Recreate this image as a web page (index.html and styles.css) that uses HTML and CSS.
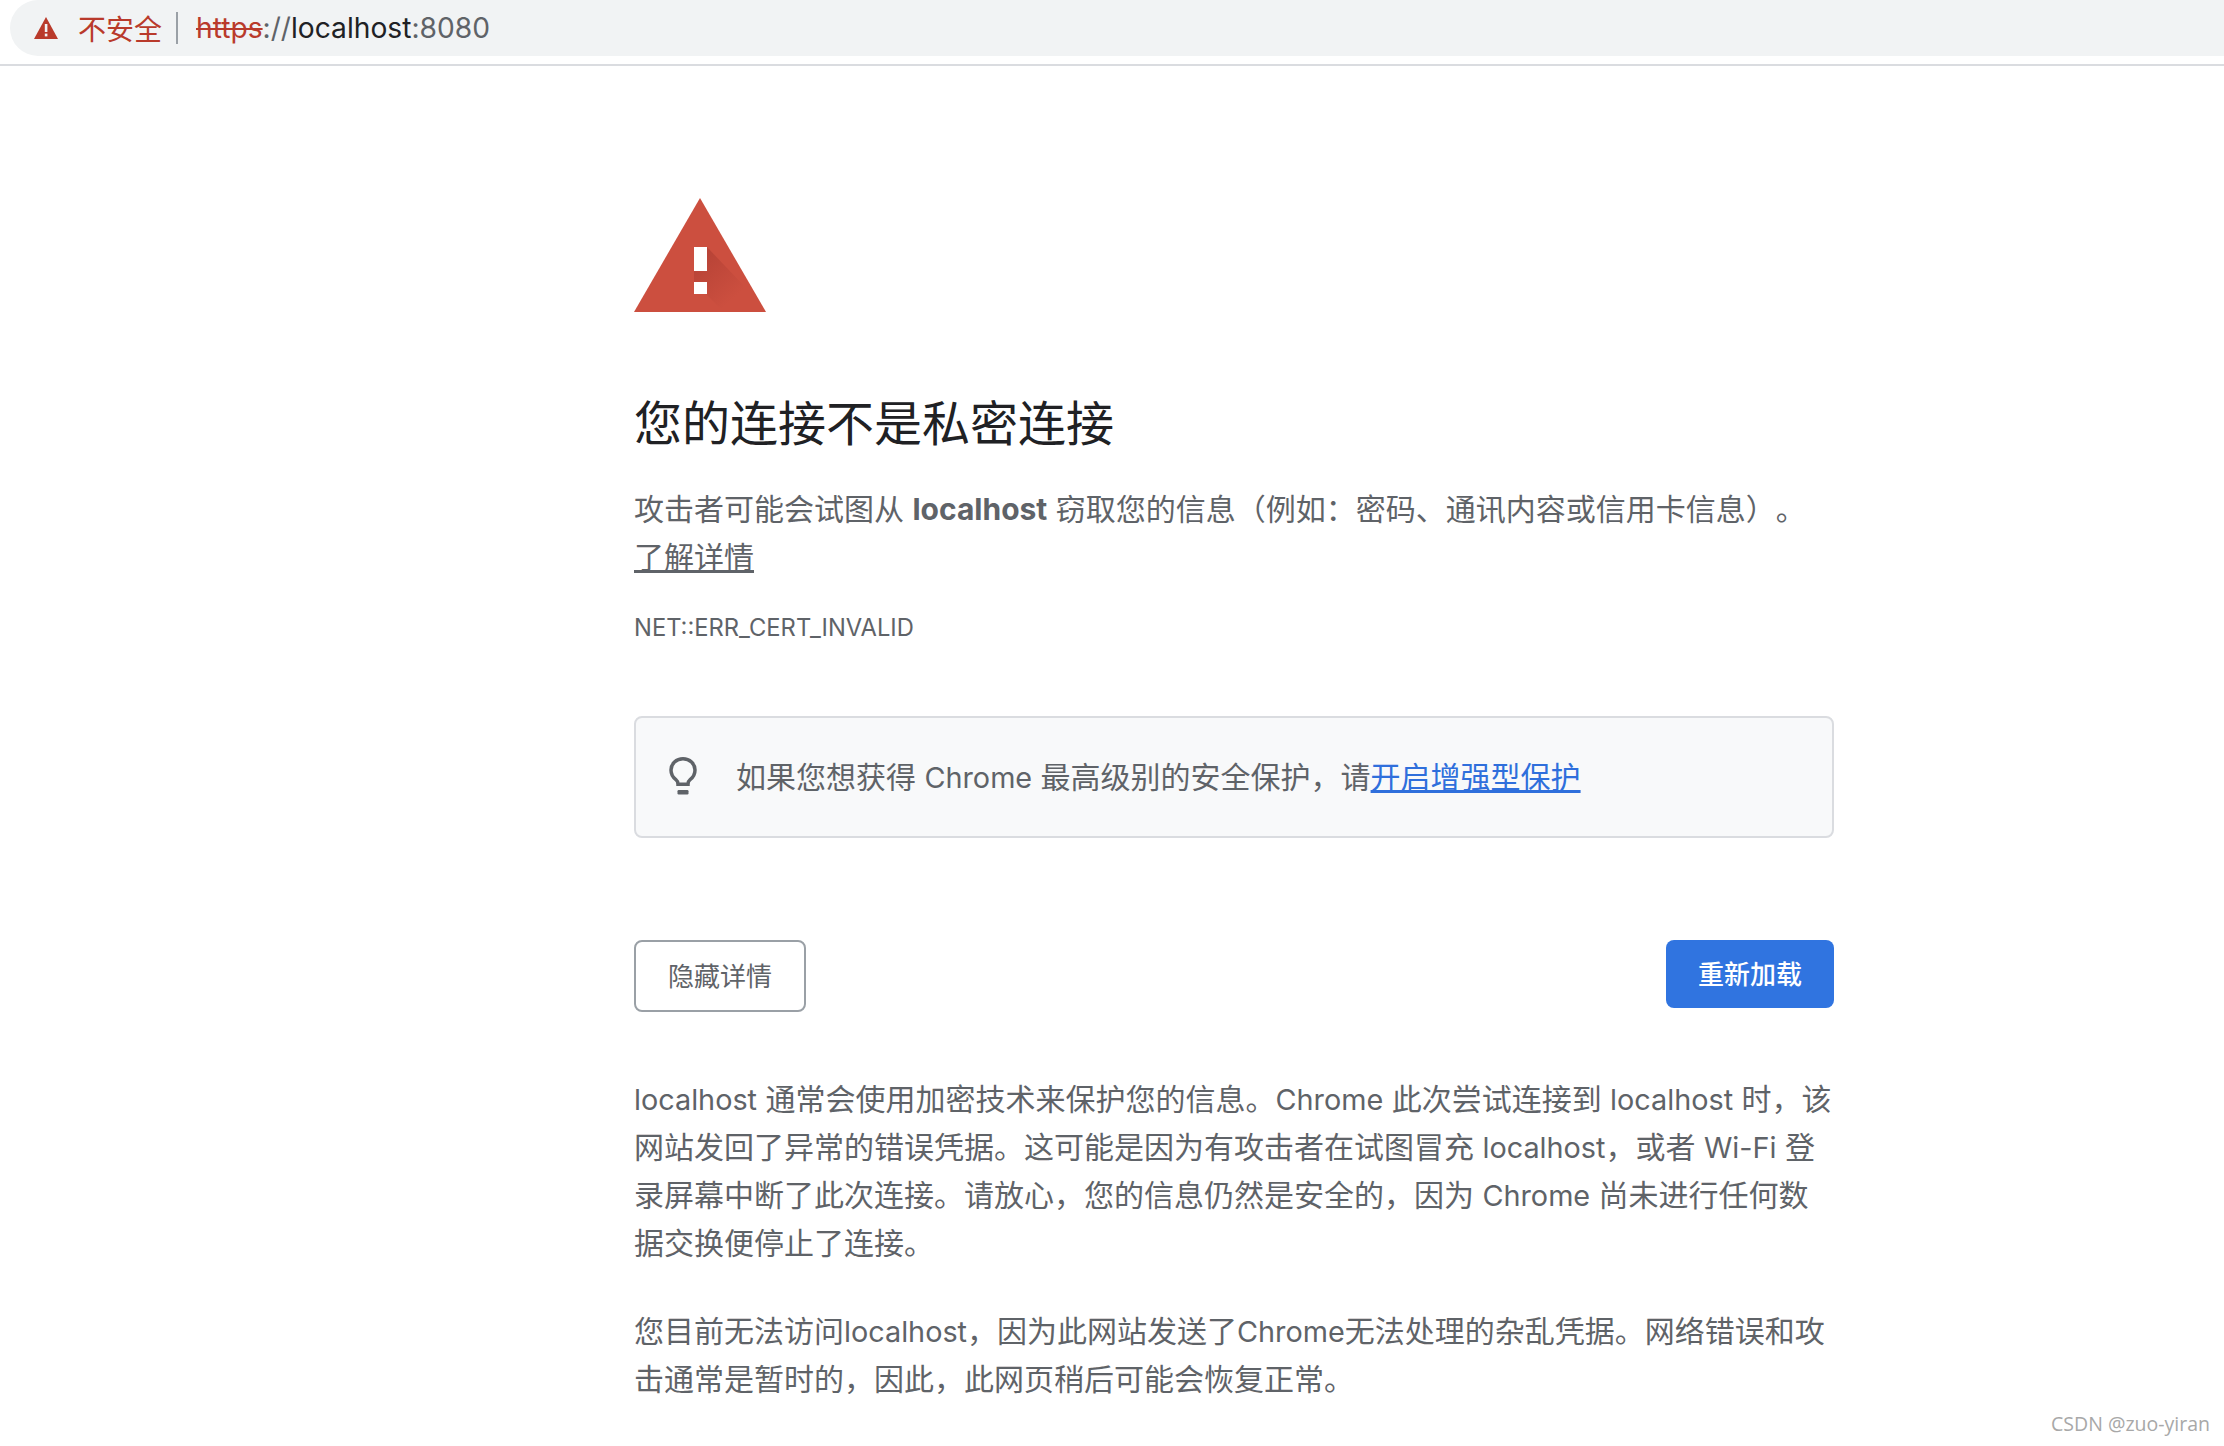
FILE: index.html
```html
<!DOCTYPE html>
<html lang="zh-CN">
<head>
<meta charset="utf-8">
<title>隐私设置错误</title>
<link rel="stylesheet" href="styles.css">
</head>
<body>
<header class="toolbar">
  <div class="omnibox">
    <svg class="warn-small" viewBox="0 0 24 22" width="24" height="22"><path fill="#b93a2b" d="M12 0 24 22H0Z"/><rect x="10.800" y="7" width="2.600" height="8" fill="#f1f3f4"/><rect x="10.800" y="16.600" width="2.600" height="2.800" fill="#f1f3f4"/></svg>
    <span class="insecure">不安全</span>
    <span class="divider"></span>
    <span class="url"><s class="scheme">https</s><span class="sep">://</span><span class="host">localhost</span><span class="port">:8080</span></span>
  </div>
</header>
<main class="page">
  <svg class="warn-big" viewBox="0 0 132 114" width="132" height="114">
    <defs>
      <linearGradient id="bang-shadow" gradientUnits="userSpaceOnUse" x1="66" y1="62" x2="100" y2="100">
        <stop offset="0" stop-color="#a83a30" stop-opacity=".55"/>
        <stop offset="1" stop-color="#a83a30" stop-opacity="0"/>
      </linearGradient>
    </defs>
    <path fill="#cc4f3f" d="M66 0 132 114H0Z"/>
    <path fill="url(#bang-shadow)" d="M73 49 112 90 120 114H90L60 84V60Z"/>
    <rect x="60" y="49" width="13" height="24" fill="#fff"/>
    <rect x="60" y="84" width="13" height="12" fill="#fff"/>
  </svg>
  <h1 class="title">您的连接不是私密连接</h1>
  <p class="lead">攻击者可能会试图从 <strong class="host-name">localhost</strong> 窃取您的信息（例如：密码、通讯内容或信用卡信息）。<a class="learn" href="#">了解详情</a></p>
  <p class="code">NET::ERR_CERT_INVALID</p>
  <div class="tip">
    <svg class="bulb" viewBox="0 0 28 38" width="28" height="38"><path fill="none" stroke="#5f6368" stroke-width="3.500" d="M14 1.750C7.300 1.750 2 6.800 2 13c0 4.200 2.100 7.500 4.900 9.600 1.400 1.100 2.100 2.500 2.100 4.600h10c0-2.100.7-3.500 2.100-4.600C23.900 20.500 26 17.200 26 13c0-6.200-5.300-11.250-12-11.250Z"/><rect x="8.500" y="33" width="11" height="4.500" rx="1.200" fill="#5f6368"/></svg>
    <span class="tip-text">如果您想获得 <span class="latin">Chrome</span> 最高级别的安全保护，请<a class="tip-link" href="#">开启增强型保护</a></span>
  </div>
  <div class="actions">
    <button class="btn btn-secondary">隐藏详情</button>
    <button class="btn btn-primary">重新加载</button>
  </div>
  <p class="body-text"><span class="latin">localhost</span> 通常会使用加密技术来保护您的信息。<span class="latin">Chrome</span> 此次尝试连接到 <span class="latin">localhost</span> 时，该网站发回了异常的错误凭据。这可能是因为有攻击者在试图冒充 <span class="latin">localhost</span>，或者 <span class="latin">Wi-Fi</span> 登录屏幕中断了此次连接。请放心，您的信息仍然是安全的，因为 <span class="latin">Chrome</span> 尚未进行任何数据交换便停止了连接。</p>
  <p class="body-text second">您目前无法访问<span class="latin">localhost</span>，因为此网站发送了<span class="latin">Chrome</span>无法处理的杂乱凭据。网络错误和攻击通常是暂时的，因此，此网页稍后可能会恢复正常。</p>
</main>
<div class="watermark">CSDN @zuo-yiran</div>
</body>
</html>
```
FILE: styles.css
```css
* { box-sizing: border-box; }
html, body { margin: 0; height: 100%; }
body {
  width: 2224px;
  height: 1446px;
  overflow: hidden;
  position: relative;
  background: #fff;
  font-family: Inter, "Noto Sans CJK SC", sans-serif;
  color: #5f6368;
  text-spacing-trim: space-all;
}
.toolbar {
  height: 66px;
  border-bottom: 2px solid #dadce0;
  padding-left: 10px;
}
.omnibox {
  height: 56px;
  background: #f1f3f4;
  border-radius: 28px 0 0 28px;
  display: flex;
  align-items: center;
  padding-left: 24px;
}
.warn-small { flex: none; }
.insecure { margin-left: 20px; font-size: 28px; color: #b93a2b; }
.divider { width: 2px; height: 32px; background: #9aa0a6; margin: 0 18px 0 14px; }
.url { font-size: 28.2px; color: #5f6368; }
.scheme { color: #b93a2b; }
.host { color: #202124; }
.page {
  width: 1200px;
  margin-left: 634px;
  padding-top: 132px;
}
.warn-big { display: block; }
.title {
  margin: 80px 0 0;
  font-size: 48px;
  line-height: 64px;
  font-weight: 400;
  color: #202124;
}
.lead {
  margin: 29px 0 0;
  font-size: 30px;
  line-height: 48px;
}
.host-name { font-weight: 700; }
.latin { font-size: 28.8px; line-height: 1; }
.learn { display: block; color: #5f6368; text-decoration: underline; }
.code {
  margin: 31px 0 0;
  font-size: 23.75px;
  line-height: 32px;
}
.tip {
  margin-top: 72px;
  height: 122px;
  background: #f8f9fa;
  border: 2px solid #dadce0;
  border-radius: 8px;
  display: flex;
  align-items: center;
  padding-left: 33px;
  font-size: 30px;
}
.bulb { flex: none; margin-top: -2px; }
.tip-text { margin-left: 39px; margin-top: -5px; }
.tip-link { color: #2f6fdc; }
.actions {
  margin-top: 102px;
  display: flex;
  justify-content: space-between;
  align-items: flex-start;
}
.btn {
  font-family: inherit;
  font-size: 26px;
  border-radius: 8px;
  padding: 0 0 4px;
}
.btn-secondary {
  width: 172px;
  height: 72px;
  background: #fff;
  border: 2px solid #9aa0a6;
  color: #5f6368;
}
.btn-primary {
  width: 168px;
  height: 68px;
  background: #3074e0;
  border: none;
  color: #fff;
  font-weight: 500;
}
.body-text {
  margin: 63px -3px 0 0;
  font-size: 30px;
  line-height: 48px;
}
.body-text.second { margin-top: 40px; }
.watermark {
  position: absolute;
  right: 14px;
  bottom: 9px;
  font-family: "Open Sans", sans-serif;
  font-size: 19.5px;
  color: #a8a8a8;
}
```
